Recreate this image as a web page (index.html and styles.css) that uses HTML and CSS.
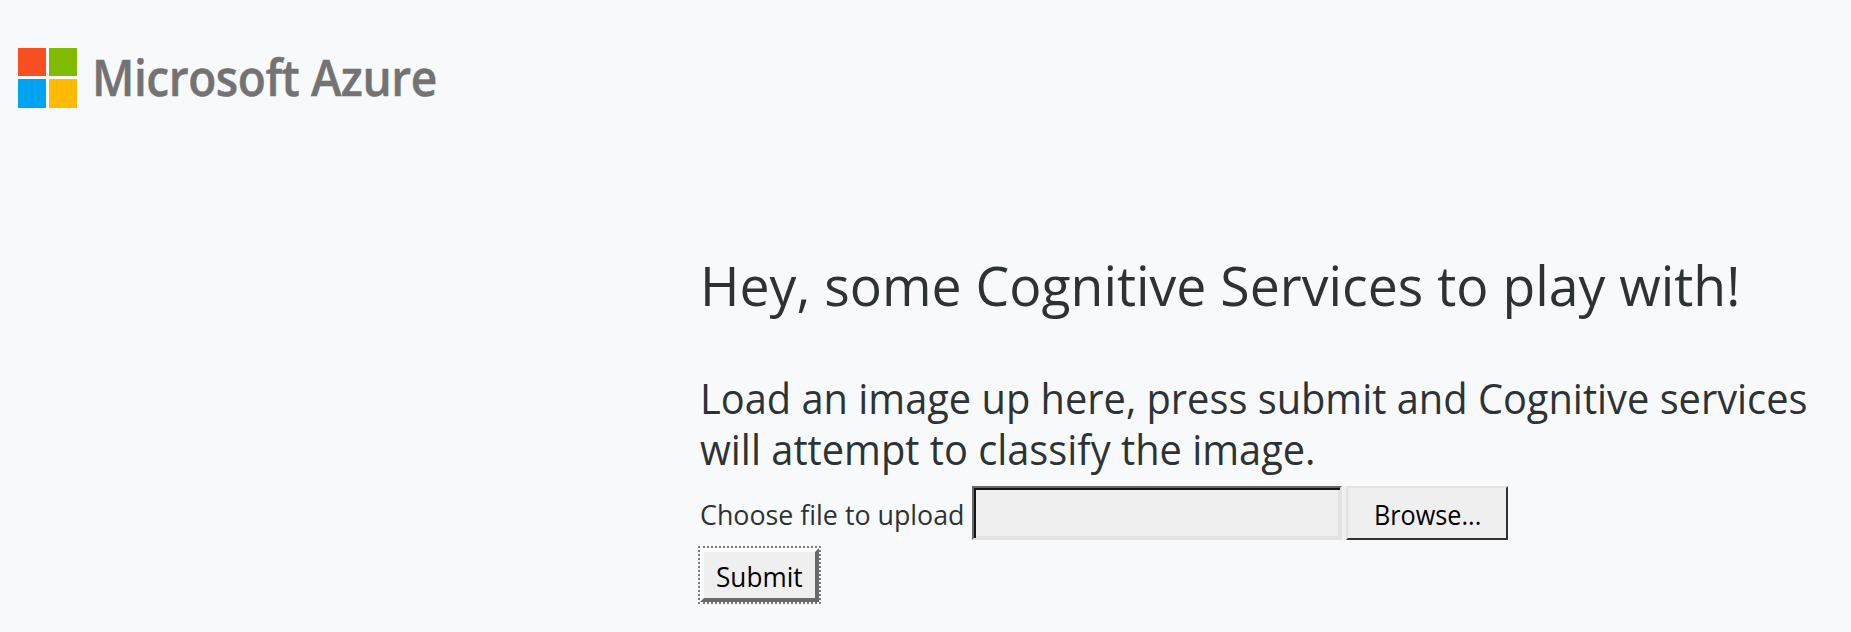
FILE: index.html
```html
<!DOCTYPE html>
<html lang="en">
<head>
<meta charset="utf-8">
<title>Cognitive Services</title>
<link rel="stylesheet" href="styles.css">
</head>
<body>
<header class="brand">
  <svg class="brand-mark" width="59" height="60" viewBox="0 0 59 60" shape-rendering="crispEdges" aria-hidden="true">
    <rect width="28" height="28" fill="#f65022"/>
    <rect x="31" width="28" height="28" fill="#80bb01"/>
    <rect y="31" width="28" height="29" fill="#00a3f1"/>
    <rect x="31" y="31" width="28" height="29" fill="#ffba01"/>
  </svg>
  <span class="brand-name">Microsoft Azure</span>
</header>
<main class="content">
  <h1 class="title"><span class="title-text">Hey, some Cognitive Services to play with!</span></h1>
  <p class="intro"><span class="intro-line">Load an image up here, press submit and Cognitive services</span><span class="intro-line">will attempt to classify the image.</span></p>
  <form class="upload">
    <div class="file-row">
      <label class="file-label" for="file"><span class="label-text">Choose file to upload</span></label>
      <div class="file-picker">
        <input class="file-path" id="file" type="text" readonly>
        <button class="browse" type="button"><span class="browse-text">Browse...</span></button>
      </div>
    </div>
    <div class="submit-focus"><button class="submit" type="button"><span class="submit-text">Submit</span></button></div>
  </form>
</main>
</body>
</html>
```
FILE: styles.css
```css
* { box-sizing: border-box; }
body {
  margin: 0;
  height: 632px;
  overflow: hidden;
  background: #f8f9fb;
  color: #2d3335;
  font-family: "Open Sans", "Noto Sans", sans-serif;
}
.brand {
  display: flex;
  padding: 48px 0 0 18px;
  height: 247px;
}
.brand-name {
  margin-left: 15px;
  margin-top: -5px;
  color: #737373;
  font-size: 50px;
  font-weight: 600;
  -webkit-text-stroke: 0.5px #737373;
  line-height: 68px;
  letter-spacing: -0.5px;
  white-space: nowrap;
  transform: scaleX(0.921);
  transform-origin: 0 0;
}
.content { padding-left: 700px; white-space: nowrap; }
.title {
  margin: 0;
  height: 125px;
  font-size: 55px;
  font-weight: 400;
  line-height: 76px;
}
.title-text, .label-text, .browse-text, .submit-text {
  display: inline-block;
  transform-origin: 0 0;
}
.title-text { transform: scaleX(0.974); }
.intro {
  margin: 0;
  height: 113px;
  font-size: 42px;
  line-height: 51px;
}
.intro-line {
  display: block;
  width: max-content;
  transform: scaleX(0.947);
  transform-origin: 0 0;
}
.file-row { display: flex; height: 61px; padding-top: 1px; }
.file-label {
  width: 272px;
  font-size: 28px;
  line-height: 56px;
}
.label-text { transform: scaleX(0.957); }
.file-picker {
  display: flex;
  gap: 4px;
  height: 54px;
  background: #f0f0f0;
}
.file-path {
  width: 370px;
  padding: 0;
  background: #efefef;
  border: 2px solid;
  border-color: #696969 #e3e3e3 #e3e3e3 #696969;
  border-radius: 0;
  box-shadow: inset 2px 2px #161616, inset -2px -2px #e3e3e3;
  outline: 0;
}
.browse {
  width: 162px;
  padding: 2px 0 0 2px;
  background: #efefef;
  border: 2px solid;
  border-color: #e3e3e3 #333 #333 #e3e3e3;
  color: #000;
  font: 28px/48px "Open Sans", sans-serif;
}
.browse-text { transform: scaleX(0.9); transform-origin: 50% 0; }
.submit-focus {
  width: 123px;
  height: 58px;
  margin-left: -2px;
  border: 2px dotted #7a7a7a;
}
.submit {
  display: block;
  width: 119px;
  height: 54px;
  padding: 0;
  background: #efefef;
  border: 4px solid;
  border-color: #fff #696969 #696969 #fff;
  color: #000;
  font: 28px/48px "Open Sans", sans-serif;
}
.submit-text { transform: scaleX(0.935); transform-origin: 50% 0; }
```
